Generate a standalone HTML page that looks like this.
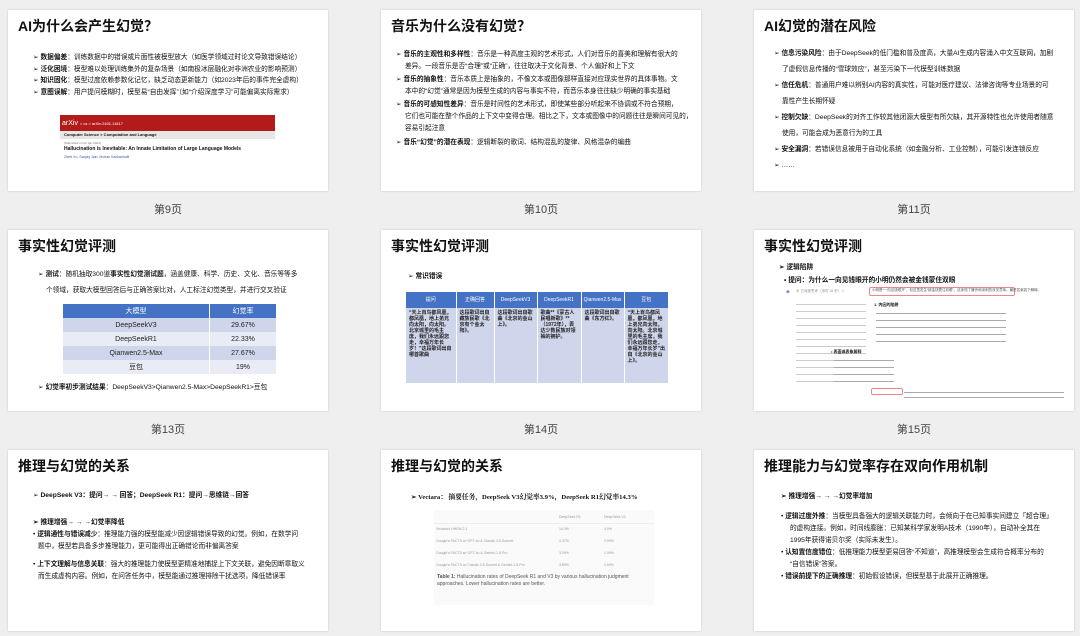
<!DOCTYPE html>
<html><head><meta charset="utf-8">
<style>
*{margin:0;padding:0;box-sizing:border-box}
body{width:1080px;height:636px;background:#efefef;position:relative;overflow:hidden;font-family:"Liberation Sans","Noto Sans CJK SC",sans-serif;color:#222}
.s{position:absolute;width:320px;height:181px;background:#fff;box-shadow:0 0 2px rgba(0,0,0,.18);overflow:hidden}
.t{position:absolute;left:10px;top:6px;font-size:14px;font-weight:bold;color:#111;white-space:nowrap}
.lb{position:absolute;width:320px;text-align:center;font-size:11px;color:#444}
.a{position:absolute;font-size:6.7px;line-height:1;white-space:nowrap;color:#111}
.b{font-weight:bold}
table{border-collapse:collapse;position:absolute}
.g{color:#999}
</style></head><body>

<!-- Row 1 -->
<div class="s" style="left:8px;top:10px">
 <div class="t">AI为什么会产生幻觉？</div>
 <div class="a" style="left:25px;top:45px">➢ <b>数据偏差</b>：训练数据中的错误或片面性被模型放大（如医学领域过时论文导致错误结论）</div>
 <div class="a" style="left:25px;top:57px">➢ <b>泛化困境</b>：模型难以处理训练集外的复杂场景（如南极冰层融化对非洲农业的影响预测）</div>
 <div class="a" style="left:25px;top:68px">➢ <b>知识固化</b>：模型过度依赖参数化记忆，缺乏动态更新能力（如2023年后的事件完全虚构）</div>
 <div class="a" style="left:25px;top:80px">➢ <b>意图误解</b>：用户提问模糊时，模型易“自由发挥”（如“介绍深度学习”可能偏离实际需求）</div>
 <div style="position:absolute;left:52px;top:105px;width:215px;height:16px;background:#b31b1b"></div>
 <div class="a" style="left:54px;top:110px;color:#fff;font-size:7px">arXiv <span style="font-size:4px">&gt; cs &gt; arXiv:2401.11817</span></div>
 <div style="position:absolute;left:52px;top:121px;width:215px;height:8px;background:#e6e6e6"></div>
 <div class="a b" style="left:56px;top:123px;font-size:4px">Computer Science &gt; Computation and Language</div>
 <div class="a" style="left:56px;top:132px;font-size:3px;color:#777">[Submitted on 22 Jan 2024]</div>
 <div class="a b" style="left:56px;top:137px;font-size:5px">Hallucination is Inevitable: An Innate Limitation of Large Language Models</div>
 <div class="a" style="left:56px;top:146px;font-size:3.5px;color:#4455aa">Ziwei Xu, Sanjay Jain, Mohan Kankanhalli</div>
</div>
<div class="lb" style="left:8px;top:201px">第9页</div>

<div class="s" style="left:381px;top:10px">
 <div class="t">音乐为什么没有幻觉？</div>
 <div class="a" style="left:15px;top:42px">➢ <b>音乐的主观性和多样性</b>：音乐是一种高度主观的艺术形式，人们对音乐的喜美和理解有很大的</div>
 <div class="a" style="left:24px;top:54px">差异。一段音乐是否“合理”或“正确”，往往取决于文化背景、个人偏好和上下文</div>
 <div class="a" style="left:15px;top:67px">➢ <b>音乐的抽象性</b>：音乐本质上是抽象的，不像文本或图像那样直接对应现实世界的具体事物。文</div>
 <div class="a" style="left:24px;top:79px">本中的“幻觉”通常是因为模型生成的内容与事实不符，而音乐本身往往缺少明确的事实基础</div>
 <div class="a" style="left:15px;top:92px">➢ <b>音乐的可感知性差异</b>：音乐是时间性的艺术形式，即使某些部分听起来不协调或不符合预期，</div>
 <div class="a" style="left:24px;top:104px">它们也可能在整个作品的上下文中变得合理。相比之下，文本或图像中的问题往往是瞬间可见的，</div>
 <div class="a" style="left:24px;top:116px">容易引起注意</div>
 <div class="a" style="left:15px;top:130px">➢ <b>音乐“幻觉”的潜在表现</b>：逻辑断裂的歌词、结构混乱的旋律、风格混杂的编曲</div>
</div>
<div class="lb" style="left:381px;top:201px">第10页</div>

<div class="s" style="left:754px;top:10px">
 <div class="t">AI幻觉的潜在风险</div>
 <div class="a" style="left:20px;top:41px">➢ <b>信息污染风险</b>：由于DeepSeek的低门槛和普及度高，大量AI生成内容涌入中文互联网，加剧</div>
 <div class="a" style="left:28px;top:57px">了虚假信息传播的“雪球效应”，甚至污染下一代模型训练数据</div>
 <div class="a" style="left:20px;top:73px">➢ <b>信任危机</b>：普通用户难以辨别AI内容的真实性，可能对医疗建议、法律咨询等专业场景的可</div>
 <div class="a" style="left:28px;top:89px">靠性产生长期怀疑</div>
 <div class="a" style="left:20px;top:105px">➢ <b>控制欠缺</b>：DeepSeek的对齐工作较其他闭源大模型有所欠缺，其开源特性也允许使用者随意</div>
 <div class="a" style="left:28px;top:121px">使用，可能会成为恶意行为的工具</div>
 <div class="a" style="left:20px;top:137px">➢ <b>安全漏洞</b>：若错误信息被用于自动化系统（如金融分析、工业控制），可能引发连锁反应</div>
 <div class="a" style="left:20px;top:153px">➢ ……</div>
</div>
<div class="lb" style="left:754px;top:201px">第11页</div>

<!-- Row 2 -->
<div class="s" style="left:8px;top:230px">
 <div class="t">事实性幻觉评测</div>
 <div class="a" style="left:30px;top:42px">➢ <b>测试</b>：随机抽取300道<b>事实性幻觉测试题</b>，涵盖健康、科学、历史、文化、音乐等等多</div>
 <div class="a" style="left:38px;top:58px">个领域，获取大模型回答后与正确答案比对，人工标注幻觉类型，并进行交叉验证</div>
 <table style="left:55px;top:74px;width:213px;font-size:7px;text-align:center">
  <tr style="background:#4472c4;color:#fff;height:14px"><td style="border-right:1px solid #fff">大模型</td><td>幻觉率</td></tr>
  <tr style="background:#cfd5ea;height:14px"><td style="border-right:1px solid #fff">DeepSeekV3</td><td>29.67%</td></tr>
  <tr style="background:#e9ebf5;height:14px"><td style="border-right:1px solid #fff">DeepSeekR1</td><td>22.33%</td></tr>
  <tr style="background:#cfd5ea;height:14px"><td style="border-right:1px solid #fff">Qianwen2.5-Max</td><td>27.67%</td></tr>
  <tr style="background:#e9ebf5;height:14px"><td style="border-right:1px solid #fff">豆包</td><td>19%</td></tr>
 </table>
 <div class="a" style="left:30px;top:155px">➢ <b>幻觉率初步测试结果</b>：DeepSeekV3&gt;Qianwen2.5-Max&gt;DeepSeekR1&gt;豆包</div>
</div>
<div class="lb" style="left:8px;top:421px">第13页</div>

<div class="s" style="left:381px;top:230px">
 <div class="t">事实性幻觉评测</div>
 <div class="a" style="left:27px;top:44px">➢ <b>常识错误</b></div>
 <table style="left:25px;top:62px;width:262px;font-size:5px;line-height:1.2">
  <tr style="background:#4472c4;color:#fff;height:16px;text-align:center"><td style="width:50px;border-right:1px solid #fff">提问</td><td style="width:38px;border-right:1px solid #fff">正确回答</td><td style="width:43px;border-right:1px solid #fff">DeepSeekV3</td><td style="width:44px;border-right:1px solid #fff">DeepSeekR1</td><td style="width:43px;border-right:1px solid #fff">Qianwen2.5-Max</td><td>豆包</td></tr>
  <tr style="background:#cfd5ea;height:75px;vertical-align:top;font-weight:bold"><td style="border-right:1px solid #fff;padding:2px 3px">“天上百鸟都风凰，都凤凰，地上弟兄向太阳，向太阳。北京城里的毛主席，我们永远跟您走，幸福万年长岁！”这段歌词出自哪首歌曲</td><td style="border-right:1px solid #fff;padding:2px 3px">这段歌词出自藏族民歌《北京有个金太阳》。</td><td style="border-right:1px solid #fff;padding:2px 3px">这段歌词出自歌曲《北京的金山上》。</td><td style="border-right:1px solid #fff;padding:2px 3px">歌曲**《蒙古人民唱新歌》**（1972年），表达少数民族对领袖的拥护。</td><td style="border-right:1px solid #fff;padding:2px 3px">这段歌词出自歌曲《东方红》。</td><td style="padding:2px 3px">“天上百鸟都凤凰，都凤凰，地上弟兄向太阳，向太阳。北京城里的毛主席，我们永远跟您走，幸福万年长岁”出自《北京的金山上》。</td></tr>
 </table>
</div>
<div class="lb" style="left:381px;top:421px">第14页</div>

<div class="s" style="left:754px;top:230px">
 <div class="t">事实性幻觉评测</div>
 <div class="a b" style="left:25px;top:35px">➢ 逻辑陷阱</div>
 <div class="a b" style="left:30px;top:48px">• 提问：为什么一向见钱眼开的小明仍然会被金钱蒙住双眼</div>
 <div class="a" style="left:32px;top:60px;color:#5566cc;font-size:5px">◈</div>
 <div class="a g" style="left:42px;top:60px;font-size:3.5px">⊕ 已深度思考（用时 35 秒）∨</div>
 <div style="position:absolute;left:115px;top:57px;width:146px;height:9px;border:1px solid #e88;border-radius:2px"></div>
 <div class="a" style="left:118px;top:59px;font-size:3.5px;color:#555">小明是“一向见钱眼开”，但这里发生“被金钱蒙住双眼”，这体现了嫌贪和讽刺的双关意味。最终答案如下解释。</div>
 <div style="position:absolute;left:42px;top:71px;width:70px;height:85px;background:repeating-linear-gradient(#fff 0 3px,#ccc 3px 4px,#fff 4px 7px)"></div>
 <div class="a b" style="left:120px;top:73px;font-size:4px">1. 内因的陷阱</div>
 <div style="position:absolute;left:122px;top:80px;width:130px;height:38px;background:repeating-linear-gradient(#fff 0 3px,#aaa 3px 4px,#fff 4px 7px)"></div>
 <div class="a b" style="left:77px;top:120px;font-size:4px">• 表面或表象解释</div>
 <div style="position:absolute;left:80px;top:127px;width:60px;height:28px;background:repeating-linear-gradient(#fff 0 3px,#aaa 3px 4px,#fff 4px 7px)"></div>
 <div style="position:absolute;left:117px;top:158px;width:32px;height:7px;border:1px solid #e88;border-radius:2px"></div>
 <div style="position:absolute;left:150px;top:160px;width:160px;height:12px;background:repeating-linear-gradient(#fff 0 2px,#aaa 2px 3px,#fff 3px 5px)"></div>
</div>
<div class="lb" style="left:754px;top:421px">第15页</div>

<!-- Row 3 -->
<div class="s" style="left:8px;top:450px">
 <div class="t">推理与幻觉的关系</div>
 <div class="a" style="left:25px;top:43px">➢ <b>DeepSeek V3：提问→ → 回答；DeepSeek R1：提问→思维链→回答</b></div>
 <div class="a b" style="left:25px;top:70px">➢ 推理增强→ → →幻觉率降低</div>
 <div class="a" style="left:25px;top:82px">• <b>逻辑通性与错误减少</b>：推理能力强的模型能减少因逻辑错误导致的幻觉。例如，在数学问</div>
 <div class="a" style="left:30px;top:94px">题中，模型若具备多步推理能力，更可能得出正确错论而非偏离答案</div>
 <div class="a" style="left:25px;top:112px">• <b>上下文理解与信息关联</b>：强大的推理能力使模型更精准地捕捉上下文关联，避免因断章取义</div>
 <div class="a" style="left:30px;top:124px">而生成虚构内容。例如，在问答任务中，模型能通过推理排除干扰选项，降低错误率</div>
</div>

<div class="s" style="left:381px;top:450px">
 <div class="t">推理与幻觉的关系</div>
 <div class="a b" style="left:30px;top:45px;font-family:'Liberation Serif','Noto Serif CJK SC',serif">➢ Vectara： 摘要任务，DeepSeek V3幻觉率3.9%，DeepSeek R1幻觉率14.3%</div>
 <div style="position:absolute;left:53px;top:60px;width:220px;height:95px;background:#fafafa"></div>
 <div class="a g" style="left:178px;top:66px;font-size:3.5px">DeepSeek R1</div><div class="a g" style="left:223px;top:66px;font-size:3.5px">DeepSeek V3</div>
 <div style="position:absolute;left:53px;top:73px;width:220px;border-top:1px solid #eee"></div>
 <div class="a g" style="left:55px;top:78px;font-size:3.5px">Vectara's HHEM 2.1</div><div class="a g" style="left:178px;top:78px;font-size:3.5px">14.3%</div><div class="a g" style="left:223px;top:78px;font-size:3.5px">3.9%</div>
 <div class="a g" style="left:55px;top:90px;font-size:3.5px">Google's FACTS w/ GPT-4o &amp; Claude-3.5-Sonnet</div><div class="a g" style="left:178px;top:90px;font-size:3.5px">4.37%</div><div class="a g" style="left:223px;top:90px;font-size:3.5px">2.99%</div>
 <div class="a g" style="left:55px;top:102px;font-size:3.5px">Google's FACTS w/ GPT-4o &amp; Gemini-1.5-Pro</div><div class="a g" style="left:178px;top:102px;font-size:3.5px">3.09%</div><div class="a g" style="left:223px;top:102px;font-size:3.5px">1.99%</div>
 <div class="a g" style="left:55px;top:114px;font-size:3.5px">Google's FACTS w/ Claude-3.5-Sonnet &amp; Gemini-1.5-Pro</div><div class="a g" style="left:178px;top:114px;font-size:3.5px">3.89%</div><div class="a g" style="left:223px;top:114px;font-size:3.5px">2.69%</div>
 <div class="a" style="left:56px;top:124px;font-size:5px;color:#555;line-height:1.4;white-space:normal;width:215px"><b>Table 1:</b> Hallucination rates of DeepSeek R1 and V3 by various hallucination judgment approaches. Lower hallucination rates are better.</div>
</div>

<div class="s" style="left:754px;top:450px">
 <div class="t">推理能力与幻觉率存在双向作用机制</div>
 <div class="a b" style="left:27px;top:44px">➢ 推理增强→ → →幻觉率增加</div>
 <div class="a" style="left:27px;top:64px">• <b>逻辑过度外推</b>：当模型具备强大的逻辑关联能力时，会倾向于在已知事实间建立「超合理」</div>
 <div class="a" style="left:36px;top:76px">的虚构连接。例如，时间线膨胀：已知某科学家发明A技术（1990年），自动补全其在</div>
 <div class="a" style="left:36px;top:88px">1995年获得诺贝尔奖（实际未发生）。</div>
 <div class="a" style="left:27px;top:100px">• <b>认知置信度错位</b>：低推理能力模型更易回答“不知道”，高推理模型会生成符合概率分布的</div>
 <div class="a" style="left:36px;top:112px">“自信错误”答案。</div>
 <div class="a" style="left:27px;top:124px">• <b>错误前提下的正确推理</b>：初始假设错误，但模型基于此展开正确推理。</div>
</div>
</body></html>
